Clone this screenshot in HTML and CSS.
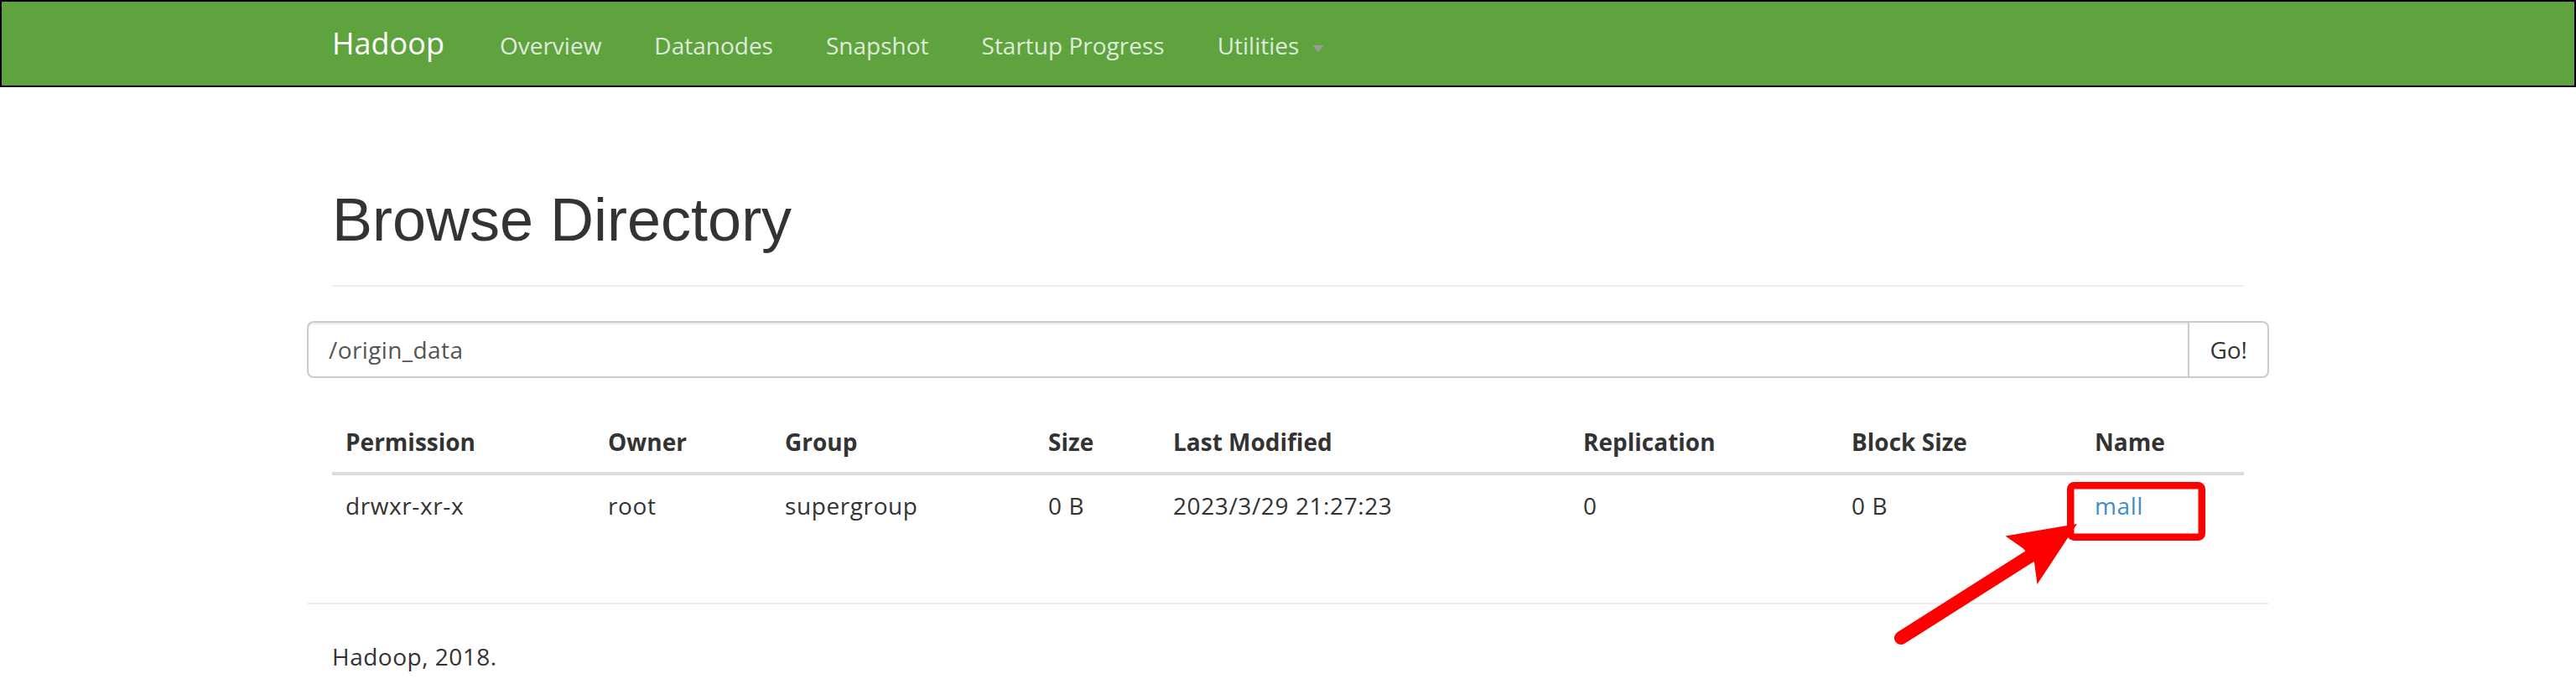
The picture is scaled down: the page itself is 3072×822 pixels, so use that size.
FILE: index.html
```html
<!DOCTYPE html>
<html lang="en">
<head>
<meta charset="utf-8">
<title>Browsing HDFS</title>
<link rel="stylesheet" href="styles.css">
</head>
<body>
<header class="navbar">
  <div class="nav-inner">
    <a class="brand" href="#">Hadoop</a>
    <ul class="nav">
      <li><a href="#">Overview</a></li>
      <li><a href="#">Datanodes</a></li>
      <li><a href="#">Snapshot</a></li>
      <li><a href="#">Startup Progress</a></li>
      <li><a href="#">Utilities<span class="caret"></span></a></li>
    </ul>
  </div>
</header>

<main class="container">
  <div class="page-header">
    <h1>Browse Directory</h1>
  </div>

  <div class="search">
    <input class="path" type="text" value="/origin_data">
    <button class="go" type="button">Go!</button>
  </div>

  <table class="listing">
    <colgroup>
      <col class="c-perm"><col class="c-owner"><col class="c-group"><col class="c-size">
      <col class="c-mod"><col class="c-rep"><col class="c-block"><col class="c-name">
    </colgroup>
    <thead>
      <tr>
        <th>Permission</th><th>Owner</th><th>Group</th><th>Size</th>
        <th>Last Modified</th><th>Replication</th><th>Block Size</th><th>Name</th>
      </tr>
    </thead>
    <tbody>
      <tr>
        <td>drwxr-xr-x</td><td>root</td><td>supergroup</td><td>0 B</td>
        <td>2023/3/29 21:27:23</td><td>0</td><td>0 B</td><td><a class="file-link" href="#">mall</a></td>
      </tr>
    </tbody>
  </table>

  <hr class="footer-rule">
  <p class="footer">Hadoop, 2018.</p>
</main>

<svg class="annotation" width="3072" height="822" viewBox="0 0 3072 822" aria-hidden="true">
  <rect x="2469.25" y="579.25" width="156.5" height="61.5" rx="4" fill="none" stroke="#ff0000" stroke-width="8.5"/>
  <line x1="2267" y1="761" x2="2420" y2="664" stroke="#ff0000" stroke-width="16" stroke-linecap="round"/>
  <polygon points="2391.5,639.5 2477,625 2429.5,697 2426,671 2413,654.5" fill="#ff0000"/>
</svg>
</body>
</html>
```

FILE: styles.css
```css
html, body {
  margin: 0;
  padding: 0;
}

body {
  font-family: "Open Sans", "Noto Sans", sans-serif;
  font-size: 28px;
  line-height: 40px;
  color: #333;
  background: #fff;
}

a {
  text-decoration: none;
}

/* ---------- navbar ---------- */
.navbar {
  box-sizing: border-box;
  height: 104px;
  background: #5fa33e;
  border: 2px solid #000;
}

.nav-inner {
  box-sizing: border-box;
  width: 2340px;
  height: 100px;
  margin: 0 auto;
  padding-left: 30px;
  display: flex;
  align-items: flex-start;
}

.brand {
  font-size: 36px;
  line-height: 100px;
  color: #fff;
  margin-right: 66px;
}

.nav {
  list-style: none;
  margin: 0;
  padding: 0;
  display: flex;
  gap: 63px;
}

.nav a {
  display: block;
  padding-top: 4px;
  line-height: 96px;
  color: #dfeada;
}

.caret {
  display: inline-block;
  width: 0;
  height: 0;
  margin-left: 16px;
  vertical-align: middle;
  border-top: 8px solid #9c9c9c;
  border-left: 7px solid transparent;
  border-right: 7px solid transparent;
}

/* ---------- content ---------- */
.container {
  box-sizing: border-box;
  width: 2340px;
  margin: 0 auto;
  padding: 0 30px;
}

.page-header {
  margin-top: 119px;
  padding-bottom: 38px;
  border-bottom: 2px solid #eee;
  margin-bottom: 41px;
}

.page-header h1 {
  margin: 0;
  font-family: "Liberation Sans", Arial, sans-serif;
  font-size: 72px;
  font-weight: 400;
  line-height: 1.1;
  color: #333;
}

.search {
  display: flex;
  margin: 0 -30px;
  height: 68px;
}

.path {
  flex: 1;
  box-sizing: border-box;
  height: 68px;
  margin: 0;
  padding: 12px 24px;
  border: 2px solid #ccc;
  border-radius: 8px 0 0 8px;
  box-shadow: inset 0 2px 2px rgba(0, 0, 0, 0.075);
  font-family: "Open Sans", "Noto Sans", sans-serif;
  font-size: 28px;
  line-height: 40px;
  letter-spacing: 0.4px;
  color: #555;
  background: #fff;
  outline: none;
}

.go {
  box-sizing: border-box;
  height: 68px;
  margin: 0 0 0 -2px;
  padding: 0 24px;
  border: 2px solid #ccc;
  border-radius: 0 8px 8px 0;
  background: #fff;
  font-family: "Open Sans", "Noto Sans", sans-serif;
  font-size: 28px;
  line-height: 40px;
  color: #333;
}

/* ---------- table ---------- */
.listing {
  width: 100%;
  margin-top: 40px;
  border-collapse: separate;
  border-spacing: 0;
  table-layout: fixed;
}

.c-perm { width: 313px; }
.c-owner { width: 211px; }
.c-group { width: 314px; }
.c-size { width: 149px; }
.c-mod { width: 489px; }
.c-rep { width: 320px; }
.c-block { width: 290px; }
.c-name { width: 194px; }

.listing th,
.listing td {
  padding: 16px;
  line-height: 40px;
  text-align: left;
  white-space: nowrap;
}

.listing th {
  font-weight: 700;
  vertical-align: bottom;
  border-bottom: 4px solid #ddd;
}

.listing td {
  vertical-align: top;
  letter-spacing: 0.6px;
}

.file-link {
  color: #428bca;
}

/* ---------- footer ---------- */
.footer-rule {
  margin: 80px -30px 0;
  height: 0;
  border: 0;
  border-top: 2px solid #eee;
}

.footer {
  margin: 42px 0 0;
  letter-spacing: 0.5px;
}

/* ---------- annotation overlay ---------- */
.annotation {
  position: absolute;
  top: 0;
  left: 0;
  pointer-events: none;
}
```
